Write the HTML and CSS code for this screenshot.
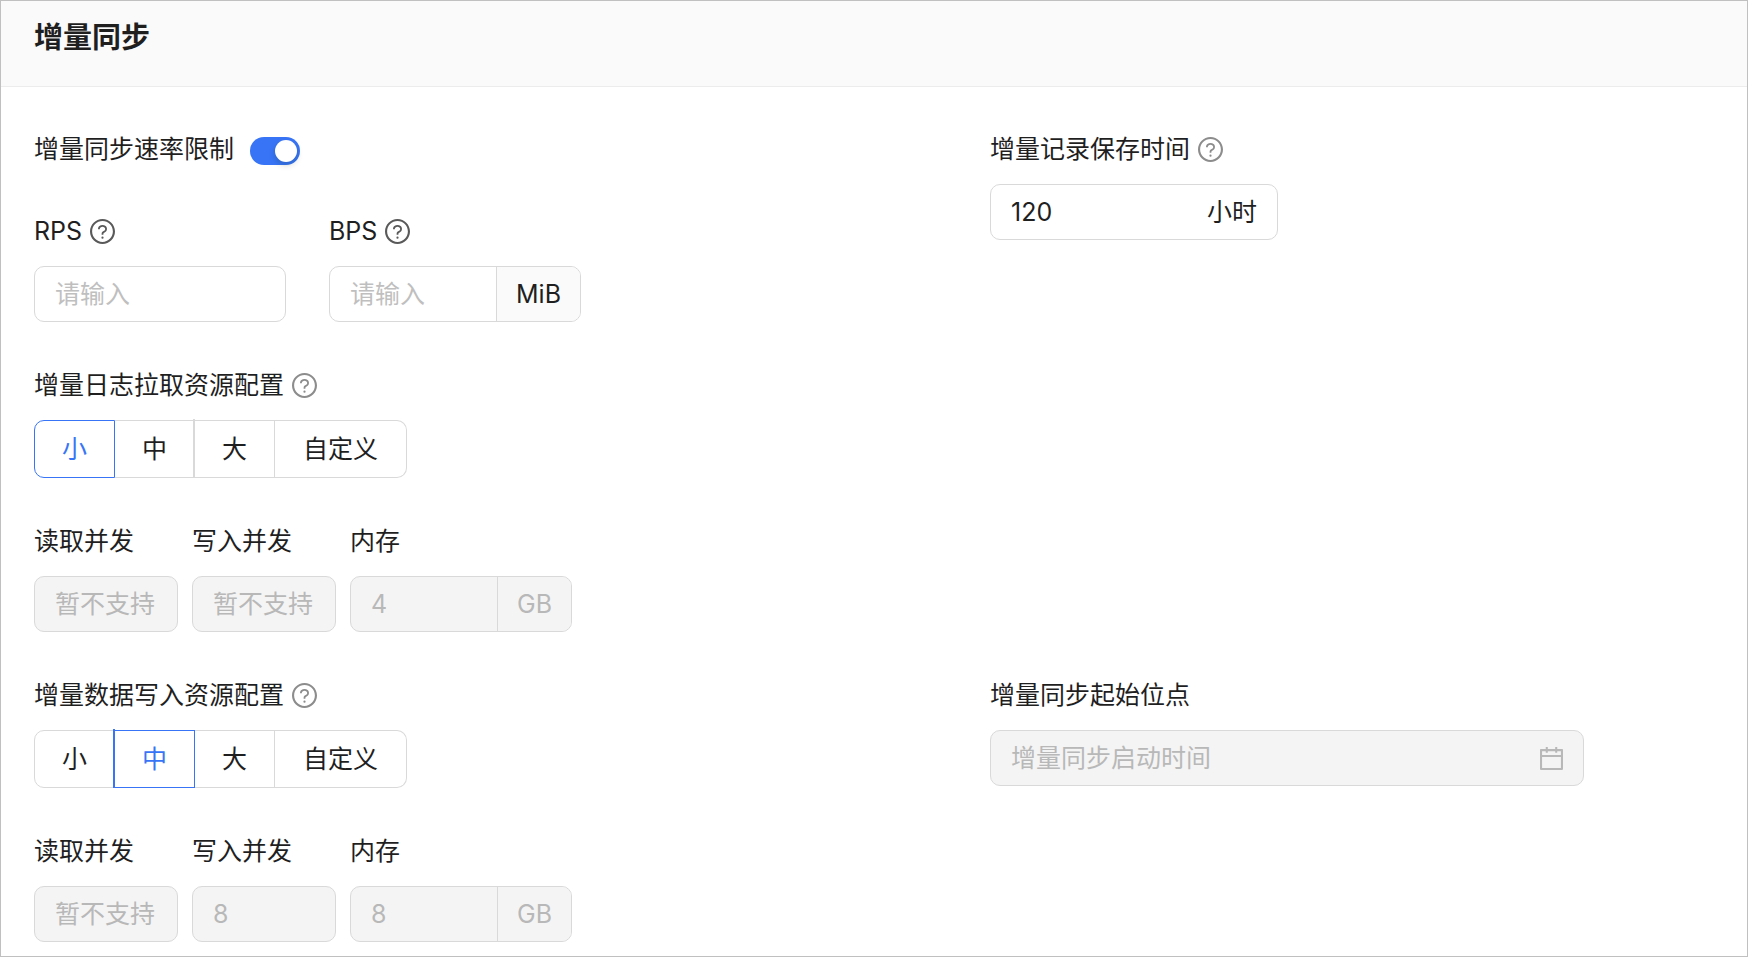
FILE: index.html
```html
<!DOCTYPE html>
<html lang="zh-CN">
  <head>
    <meta charset="UTF-8" />
    <meta name="viewport" content="width=device-width, initial-scale=1.0" />
    <title>增量同步</title>
    <link rel="stylesheet" href="styles.css">
  </head>
  <body>
    <svg class="sprite" aria-hidden="true">
      <symbol id="icon-question" viewBox="64 64 896 896">
        <path d="M512 64C264.6 64 64 264.6 64 512s200.6 448 448 448 448-200.6 448-448S759.4 64 512 64zm0 820c-205.4 0-372-166.6-372-372s166.6-372 372-372 372 166.6 372 372-166.6 372-372 372z" />
        <path d="M623.6 316.7C593.6 290.4 554 276 512 276s-81.6 14.5-111.6 40.7C369.2 344 352 380.7 352 420v7.6c0 4.4 3.6 8 8 8h48c4.4 0 8-3.6 8-8V420c0-44.1 43.1-80 96-80s96 35.9 96 80c0 31.1-22 59.6-56.1 72.7-21.2 8.1-39.2 22.3-52.1 40.9-13.1 19-19.9 41.8-19.9 64.9V620c0 4.4 3.6 8 8 8h48c4.4 0 8-3.6 8-8v-22.7a48.3 48.3 0 0 1 30.9-44.8c59-22.7 97.1-74.7 97.1-132.5.1-39.3-17.1-76-48.3-103.3zM472 732a40 40 0 1 0 80 0 40 40 0 1 0-80 0z" />
      </symbol>
      <symbol id="icon-calendar" viewBox="112 112 800 800">
        <path d="M880 184H712v-64c0-4.4-3.6-8-8-8h-56c-4.4 0-8 3.6-8 8v64H384v-64c0-4.4-3.6-8-8-8h-56c-4.4 0-8 3.6-8 8v64H144c-17.7 0-32 14.3-32 32v664c0 17.7 14.3 32 32 32h736c17.7 0 32-14.3 32-32V216c0-17.7-14.3-32-32-32zm-40 656H184V460h656v380zM184 392V256h128v48c0 4.4 3.6 8 8 8h56c4.4 0 8-3.6 8-8v-48h256v48c0 4.4 3.6 8 8 8h56c4.4 0 8-3.6 8-8v-48h128v136H184z" />
      </symbol>
    </svg>

    <header class="header">
      <h1 class="title">增量同步</h1>
    </header>

    <form class="form">
      <div class="column">
        <div class="switch-row">
          <label for="rate-limit">增量同步速率限制</label>
          <input type="checkbox" role="switch" class="switch" id="rate-limit" checked />
        </div>

        <div class="fields fields-wide">
          <div class="field field-md">
            <div class="field-label">
              <label for="rps">RPS</label>
              <svg class="help help-dark"><use href="#icon-question" /></svg>
            </div>
            <div class="control">
              <input type="text" id="rps" placeholder="请输入" />
            </div>
          </div>
          <div class="field field-md">
            <div class="field-label">
              <label for="bps">BPS</label>
              <svg class="help help-dark"><use href="#icon-question" /></svg>
            </div>
            <div class="control">
              <input type="text" id="bps" placeholder="请输入" />
              <span class="addon">MiB</span>
            </div>
          </div>
        </div>

        <div class="field" role="radiogroup" aria-labelledby="pull-label">
          <div class="field-label">
            <span id="pull-label">增量日志拉取资源配置</span>
            <svg class="help"><use href="#icon-question" /></svg>
          </div>
          <div class="options">
            <label class="option"><input type="radio" name="pull" checked />小</label>
            <label class="option"><input type="radio" name="pull" />中</label>
            <label class="option"><input type="radio" name="pull" />大</label>
            <label class="option"><input type="radio" name="pull" />自定义</label>
          </div>
        </div>

        <div class="fields">
          <div class="field field-sm">
            <div class="field-label"><label for="pull-read">读取并发</label></div>
            <div class="control disabled">
              <input type="text" id="pull-read" placeholder="暂不支持" disabled />
            </div>
          </div>
          <div class="field field-sm">
            <div class="field-label"><label for="pull-write">写入并发</label></div>
            <div class="control disabled">
              <input type="text" id="pull-write" placeholder="暂不支持" disabled />
            </div>
          </div>
          <div class="field field-memory">
            <div class="field-label"><label for="pull-memory">内存</label></div>
            <div class="control disabled">
              <input type="text" id="pull-memory" value="4" disabled />
              <span class="addon">GB</span>
            </div>
          </div>
        </div>
      </div>

      <div class="column">
        <div class="field field-lg">
          <div class="field-label">
            <label for="retention">增量记录保存时间</label>
            <svg class="help"><use href="#icon-question" /></svg>
          </div>
          <div class="control">
            <input type="text" id="retention" value="120" />
            <span class="suffix">小时</span>
          </div>
        </div>
      </div>

      <div class="column">
        <div class="field" role="radiogroup" aria-labelledby="write-label">
          <div class="field-label">
            <span id="write-label">增量数据写入资源配置</span>
            <svg class="help"><use href="#icon-question" /></svg>
          </div>
          <div class="options">
            <label class="option"><input type="radio" name="write" />小</label>
            <label class="option"><input type="radio" name="write" checked />中</label>
            <label class="option"><input type="radio" name="write" />大</label>
            <label class="option"><input type="radio" name="write" />自定义</label>
          </div>
        </div>

        <div class="fields">
          <div class="field field-sm">
            <div class="field-label"><label for="write-read">读取并发</label></div>
            <div class="control disabled">
              <input type="text" id="write-read" placeholder="暂不支持" disabled />
            </div>
          </div>
          <div class="field field-sm">
            <div class="field-label"><label for="write-write">写入并发</label></div>
            <div class="control disabled">
              <input type="text" id="write-write" value="8" disabled />
            </div>
          </div>
          <div class="field field-memory">
            <div class="field-label"><label for="write-memory">内存</label></div>
            <div class="control disabled">
              <input type="text" id="write-memory" value="8" disabled />
              <span class="addon">GB</span>
            </div>
          </div>
        </div>
      </div>

      <div class="column">
        <div class="field field-date">
          <div class="field-label"><label for="start-time">增量同步起始位点</label></div>
          <div class="control disabled">
            <input type="text" id="start-time" placeholder="增量同步启动时间" disabled />
            <span class="suffix">
              <svg class="calendar"><use href="#icon-calendar" /></svg>
            </span>
          </div>
        </div>
      </div>
    </form>
  </body>
</html>
```
FILE: styles.css
```css
*,
*::before,
*::after {
  box-sizing: border-box;
}
* {
  margin: 0;
}
body {
  min-height: 100vh;
  border: 1px solid #c0c0c0;
  background-color: #fff;
  color: #1f1f1f;
  font-family: Inter, "Noto Sans CJK SC", sans-serif;
  font-size: 25px;
  line-height: 38px;
}

svg {
  display: block;
  flex-shrink: 0;
  fill: currentColor;
}

.sprite {
  position: absolute;
  width: 0;
  height: 0;
}

.header {
  padding: 18px 33px 29px;
  border-bottom: 1px solid #ececec;
  background-color: #fafafa;
}

.title {
  font-size: 29px;
  font-weight: 600;
  line-height: 38px;
}

.form {
  display: grid;
  grid-template-columns: 239fr 181fr;
  row-gap: 44px;
  padding: 43px 33px 13px;
}

.column {
  display: flex;
  flex-direction: column;
  gap: 44px;
}

/* Switch */
.switch-row {
  display: flex;
  align-items: center;
  gap: 16px;
}

.switch {
  display: flex;
  align-items: center;
  width: 50px;
  height: 28px;
  padding: 3px;
  margin-top: 4px;
  border-radius: 14px;
  background-color: #bfbfbf;
  appearance: none;
  cursor: pointer;
}

.switch::before {
  content: "";
  width: 22px;
  height: 22px;
  border-radius: 50%;
  background-color: #fff;
  box-shadow: 0 3px 6px rgba(0, 35, 11, 0.2);
}

.switch:checked {
  justify-content: flex-end;
  background-color: #3875f6;
}

/* Fields */
.fields {
  display: flex;
  gap: 14px;
}

.fields-wide {
  gap: 43px;
}

.field {
  display: flex;
  flex-direction: column;
  gap: 16px;
}

.field-sm {
  width: 144px;
}

.field-memory {
  width: 222px;
}

.field-md {
  width: 252px;
}

.field-lg {
  width: 288px;
}

.field-date {
  width: 82%;
}

.field-label {
  display: flex;
  align-items: center;
  gap: 8px;
}

.help {
  width: 25px;
  height: 25px;
  color: #8c8c8c;
}

.help-dark {
  color: #595959;
}

.control {
  display: flex;
  height: 56px;
  border: 1px solid #d9d9d9;
  border-radius: 10px;
  background-color: #fff;
  overflow: hidden;
}

.control input {
  flex: 1;
  width: 0;
  min-width: 0;
  padding: 0 0 0 20px;
  border: none;
  outline: none;
  background: none;
  color: inherit;
  font: inherit;
}

.control input::placeholder {
  color: #bfbfbf;
  opacity: 1;
}

.addon,
.suffix {
  display: flex;
  align-items: center;
  padding: 0 20px;
}

.addon {
  padding: 0 19px;
  border-left: 1px solid #d9d9d9;
  background-color: #fafafa;
}

.disabled,
.disabled .addon {
  background-color: #f4f4f4;
  color: #b8b8b8;
}

.disabled input::placeholder {
  color: #b8b8b8;
}

.calendar {
  width: 23px;
  height: 23px;
}

/* Segmented radio buttons */
.options {
  display: flex;
}

.option {
  position: relative;
  height: 58px;
  padding: 0 27px;
  border: 1px solid #d9d9d9;
  border-left: none;
  line-height: 56px;
  cursor: pointer;
}

.option:first-child {
  border-left: 1px solid #d9d9d9;
  border-radius: 10px 0 0 10px;
}

.option:last-child {
  padding: 0 28px;
  border-radius: 0 10px 10px 0;
}

.option input {
  position: absolute;
  opacity: 0;
}

.option:nth-child(3)::before,
.option:not(:first-child):has(input:checked)::before {
  content: "";
  position: absolute;
  top: -2px;
  bottom: -1px;
  left: -2px;
  width: 2px;
  background-color: #d9d9d9;
}

.option:has(input:checked) {
  border-color: #3875f6;
  color: #3875f6;
}

.option:not(:first-child):has(input:checked)::before {
  background-color: #3875f6;
}

.option:has(input:checked) + .option::before {
  content: none;
}
```
